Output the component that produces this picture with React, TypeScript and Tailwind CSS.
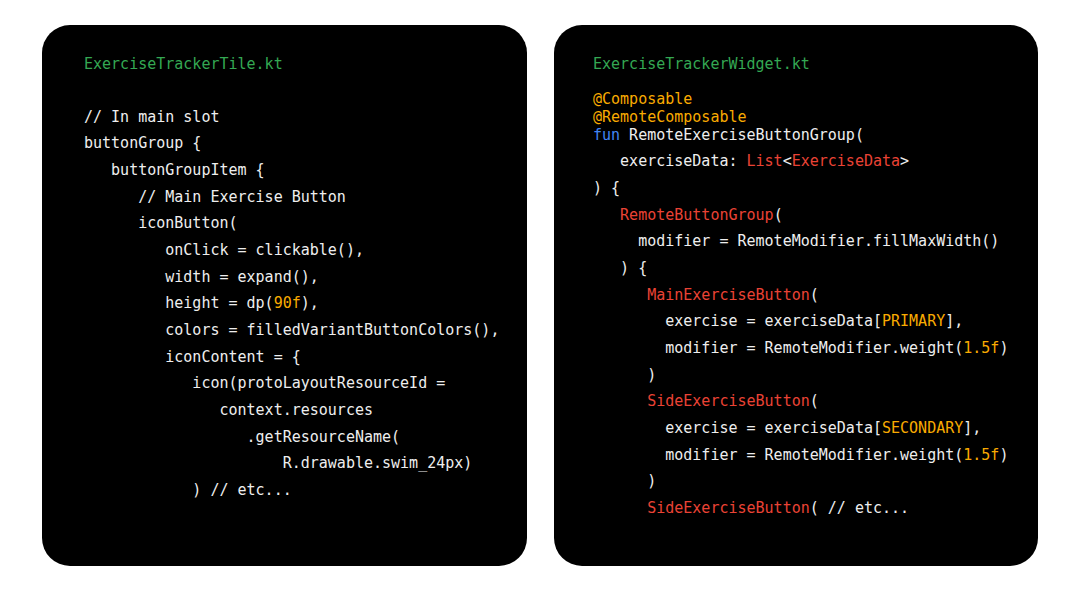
import React from "react";

type Seg = { t: string; c?: string };
const W = "text-[#eeeeee]";
const G = "text-[#34a853]";
const Y = "text-[#f9ab00]";
const R = "text-[#ea4335]";
const B = "text-[#4285f4]";

function Line({ segs, h = "h-[26.67px] leading-[26.67px]", extra = "" }: { segs: Seg[]; h?: string; extra?: string }) {
  return (
    <div className={`${h} ${extra} whitespace-pre`}>
      {segs.map((s, i) => (
        <span key={i} className={s.c ?? W}>
          {s.t}
        </span>
      ))}
    </div>
  );
}

const sp = (n: number) => " ".repeat(n);

export default function App() {
  const left: Seg[][] = [
    [{ t: "// In main slot" }],
    [{ t: "buttonGroup {" }],
    [{ t: sp(3) + "buttonGroupItem {" }],
    [{ t: sp(6) + "// Main Exercise Button" }],
    [{ t: sp(6) + "iconButton(" }],
    [{ t: sp(9) + "onClick = clickable()," }],
    [{ t: sp(9) + "width = expand()," }],
    [{ t: sp(9) + "height = dp(" }, { t: "90f", c: Y }, { t: ")," }],
    [{ t: sp(9) + "colors = filledVariantButtonColors()," }],
    [{ t: sp(9) + "iconContent = {" }],
    [{ t: sp(12) + "icon(protoLayoutResourceId =" }],
    [{ t: sp(15) + "context.resources" }],
    [{ t: sp(18) + ".getResourceName(" }],
    [{ t: sp(22) + "R.drawable.swim_24px)" }],
    [{ t: sp(12) + ") // etc..." }],
  ];

  const right: Seg[][] = [
    [{ t: sp(3) + "exerciseData: " }, { t: "List", c: R }, { t: "<" }, { t: "ExerciseData", c: R }, { t: ">" }],
    [{ t: ") {" }],
    [{ t: sp(3) }, { t: "RemoteButtonGroup", c: R }, { t: "(" }],
    [{ t: sp(5) + "modifier = RemoteModifier.fillMaxWidth()" }],
    [{ t: sp(3) + ") {" }],
    [{ t: sp(6) }, { t: "MainExerciseButton", c: R }, { t: "(" }],
    [{ t: sp(8) + "exercise = exerciseData[" }, { t: "PRIMARY", c: Y }, { t: "]," }],
    [{ t: sp(8) + "modifier = RemoteModifier.weight(" }, { t: "1.5f", c: Y }, { t: ")" }],
    [{ t: sp(6) + ")" }],
    [{ t: sp(6) }, { t: "SideExerciseButton", c: R }, { t: "(" }],
    [{ t: sp(8) + "exercise = exerciseData[" }, { t: "SECONDARY", c: Y }, { t: "]," }],
    [{ t: sp(8) + "modifier = RemoteModifier.weight(" }, { t: "1.5f", c: Y }, { t: ")" }],
    [{ t: sp(6) + ")" }],
    [{ t: sp(6) }, { t: "SideExerciseButton", c: R }, { t: "( // etc..." }],
  ];

  return (
    <div
      className="w-[1080px] h-[608px] bg-white flex gap-[27px] pl-[42px] pt-[25px] text-[15px]"
      style={{ fontFamily: '"DejaVu Sans Mono", "Liberation Mono", monospace' }}
    >
      <div className="w-[485px] h-[541px] bg-black rounded-[28px] pl-[42px] pt-[25.5px]">
        <Line segs={[{ t: "ExerciseTrackerTile.kt", c: G }]} />
        <div className="h-[26.67px]" />
        {left.map((l, i) => (
          <Line key={i} segs={l} />
        ))}
      </div>
      <div className="w-[484px] h-[541px] bg-black rounded-[28px] pl-[39px] pt-[25.5px]">
        <Line segs={[{ t: "ExerciseTrackerWidget.kt", c: G }]} />
        <Line segs={[{ t: "@Composable", c: Y }]} h="h-[18px] leading-[18px]" extra="mt-[12.67px]" />
        <Line segs={[{ t: "@RemoteComposable", c: Y }]} h="h-[18px] leading-[18px]" />
        <Line segs={[{ t: "fun", c: B }, { t: " RemoteExerciseButtonGroup(" }]} h="h-[18px] leading-[18px]" />
        <div className="mt-[4.67px]">
          {right.map((l, i) => (
            <Line key={i} segs={l} />
          ))}
        </div>
      </div>
    </div>
  );
}
